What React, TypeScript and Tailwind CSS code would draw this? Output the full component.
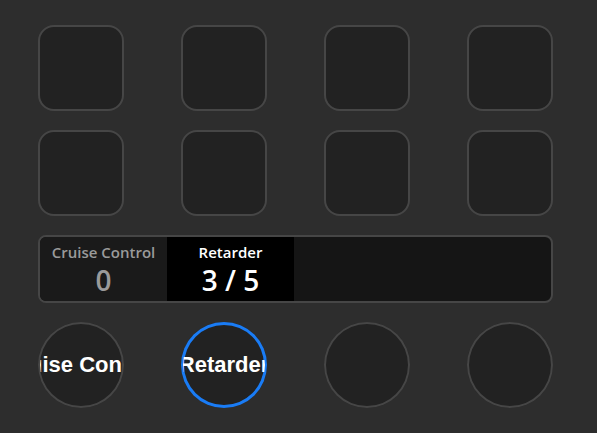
const squares = Array.from({ length: 8 });

const segments = [
  { label: "Cruise Control", value: "0", active: false },
  { label: "Retarder", value: "3 / 5", active: true },
];

const knobs = [
  { label: "Cruise Control", selected: false },
  { label: "Retarder", selected: true },
  { label: "", selected: false },
  { label: "", selected: false },
];

export default function App() {
  return (
    <div className="w-[597px] h-[433px] bg-[#2d2d2d] pl-[38px] pt-[25px] overflow-hidden">
      <div className="grid grid-cols-[repeat(4,86px)] gap-x-[57px] gap-y-[19px] w-[515px]">
        {squares.map((_, i) => (
          <button
            key={i}
            className="w-[86px] h-[86px] rounded-[16px] border-2 border-[#464646] bg-[#222222]"
          />
        ))}

        {/* Status display */}
        <div className="col-span-4 h-[68px] rounded-[8px] border-2 border-[#464646] bg-[#151515] flex overflow-hidden">
          {segments.map((s) => (
            <div
              key={s.label}
              className={`w-[127px] h-full flex flex-col items-center pt-[5px] font-['Open_Sans',sans-serif] ${
                s.active ? "bg-black text-white" : "bg-[#1a1a1a] text-[#9a9a9a]"
              }`}
            >
              <span className="text-[15px] leading-[20px] font-semibold">{s.label}</span>
              <span className="mt-[3px] text-[28px] leading-[30px] font-semibold">{s.value}</span>
            </div>
          ))}
        </div>

        {knobs.map((k, i) => (
          <button
            key={i}
            className={`w-[86px] h-[86px] rounded-full bg-[#222222] flex items-center justify-center ring-inset ${
              k.selected ? "ring-[3px] ring-[#1a7cf5]" : "ring-2 ring-[#464646]"
            }`}
          >
            <div className="w-[82px] h-[82px] rounded-full overflow-hidden flex items-center justify-center">
              <span className="whitespace-nowrap text-white font-bold text-[22px] leading-none font-['Liberation_Sans',Arial,sans-serif]">
                {k.label}
              </span>
            </div>
          </button>
        ))}
      </div>
    </div>
  );
}
